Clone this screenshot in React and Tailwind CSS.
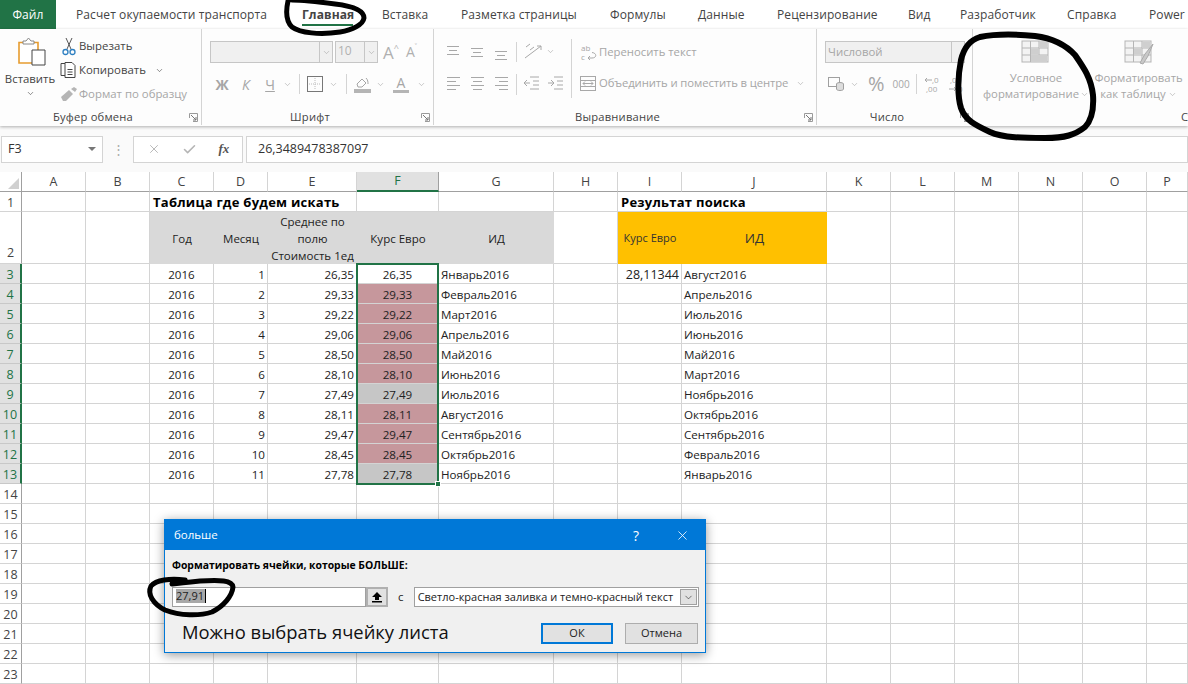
import React from 'react';
import { ChevronDown, X, Check } from 'lucide-react';

const FONT = "font-['Open_Sans','Noto_Sans',sans-serif]";

const tabs = [
  ['Расчет окупаемости транспорта', 'w-[226px]'],
  ['Главная', 'w-[80px] font-bold'],
  ['Вставка', 'w-[79px]'],
  ['Разметка страницы', 'w-[149px]'],
  ['Формулы', 'w-[88px]'],
  ['Данные', 'w-[79px]'],
  ['Рецензирование', 'w-[131px]'],
  ['Вид', 'w-[52px]'],
  ['Разработчик', 'w-[107px]'],
  ['Справка', 'w-[82px]'],
  ['Power', 'w-[39px]'],
];

const cols = ['A', 'B', 'C', 'D', 'E', 'F', 'G', 'H', 'I', 'J', 'K', 'L', 'M', 'N', 'O', 'P'];

const rows = [
  [1, '26,35', 'Январь2016', 'Август2016', 'none'],
  [2, '29,33', 'Февраль2016', 'Апрель2016', 'red'],
  [3, '29,22', 'Март2016', 'Июль2016', 'red'],
  [4, '29,06', 'Апрель2016', 'Июнь2016', 'red'],
  [5, '28,50', 'Май2016', 'Май2016', 'red'],
  [6, '28,10', 'Июнь2016', 'Март2016', 'red'],
  [7, '27,49', 'Июль2016', 'Ноябрь2016', 'gray'],
  [8, '28,11', 'Август2016', 'Октябрь2016', 'red'],
  [9, '29,47', 'Сентябрь2016', 'Сентябрь2016', 'red'],
  [10, '28,45', 'Октябрь2016', 'Февраль2016', 'red'],
  [11, '27,78', 'Ноябрь2016', 'Январь2016', 'gray'],
];

function Chev({ className = '' }) {
  return <ChevronDown size={9} strokeWidth={1.6} className={className} />;
}

function Cell({ className = '', children }) {
  return (
    <div className={`border-r border-b border-[#d4d4d4] flex items-center px-[2px] pt-[3px] whitespace-nowrap text-[11.6px] text-[#222] ${className}`}>
      {children}
    </div>
  );
}

function RowHead({ n, active, bottom }) {
  return (
    <div className={`flex justify-center border-b text-[12.5px] ${bottom ? 'items-end' : 'items-center pt-[3px]'} ${active ? 'bg-[#e1e1e1] border-[#c8c8c8] border-r-2 border-r-[#217346] text-[#217346]' : 'bg-white border-[#d4d4d4] border-r border-r-[#a0a0a0] text-[#444]'}`}>
      {n}
    </div>
  );
}

function Lines({ kind }) {
  // align icons, three short rows or rows of one width
  const sets = {
    top: [[1, 13, 3], [3, 11, 7], [1, 13, 11]],
    mid: [[1, 13, 5], [3, 11, 9], [1, 13, 13]],
    bot: [[1, 13, 8], [3, 11, 12], [1, 13, 16]],
    left: [[1, 14, 2], [1, 10, 6], [1, 14, 10], [1, 10, 14]],
    center: [[1, 14, 2], [3, 12, 6], [1, 14, 10], [3, 12, 14]],
    right: [[1, 14, 2], [5, 14, 6], [1, 14, 10], [5, 14, 14]],
  }[kind];
  return (
    <svg width="15" height="17" viewBox="0 0 15 17" stroke="#a8a8a8" strokeWidth="1">
      {sets.map(([a, b, y], i) => <line key={i} x1={a} x2={b} y1={y + 0.5} y2={y + 0.5} />)}
    </svg>
  );
}

function Launcher({ className = '' }) {
  return (
    <svg width="9" height="9" viewBox="0 0 9 9" fill="none" stroke="#9a9a9a" strokeWidth="1" className={className}>
      <path d="M0.5 5V0.5H8.5V8.5H4" />
      <path d="M2 2L7 7M7 4V7H4" stroke="#777" />
    </svg>
  );
}

function Sep({ className = '' }) {
  return <div className={`w-px bg-[#d4d4d4] ${className}`} />;
}

function GroupLabel({ children, launcher }) {
  return (
    <div className="absolute left-0 right-0 bottom-0 h-[16px] flex items-center justify-center pr-[15px] text-[11.2px] text-[#444] tracking-[0.2px]">
      {children}
      {launcher && <Launcher className="absolute right-[3px] top-[4px]" />}
    </div>
  );
}

function Clipboard() {
  return (
    <div className="w-[202px] h-[96px] shrink-0 relative border-r border-[#d4d4d4]">
      <div className="flex pt-[5px]">
        <div className="w-[60px] flex flex-col items-center pt-[3px] text-[11.4px] text-[#444]">
          <svg width="28" height="30" viewBox="0 0 28 30" fill="none" className="ml-[3px]">
            <path d="M1 5.5H20V26H1Z" fill="#fff" stroke="#e69c2f" strokeWidth="1.6" />
            <path d="M8 4 L10.5 1 L13 4 H16 V7 H5 V4Z" fill="#fff" stroke="#888" />
            <path d="M14 13H27V28H14Z" fill="#fff" stroke="#444" />
          </svg>
          <span className="mt-[4px] leading-[16px]">Вставить</span>
          <Chev className="mt-[2px] text-[#444]" />
        </div>
        <div className="flex flex-col text-[11.4px] text-[#444]">
          <div className="h-[24px] flex items-center">
            <svg width="19" height="19" viewBox="0 0 19 19" fill="none">
              <path d="M6 1L11 12M12 1L7 12" stroke="#555" />
              <circle cx="5.5" cy="15" r="2.5" stroke="#2d7fc1" strokeWidth="1.3" />
              <circle cx="12.5" cy="15" r="2.5" stroke="#2d7fc1" strokeWidth="1.3" />
            </svg>
            <span>Вырезать</span>
          </div>
          <div className="h-[24px] flex items-center">
            <svg width="19" height="18" viewBox="0 0 19 18" fill="none" stroke="#444">
              <path d="M5 2.5H1V14.5H5" />
              <path d="M5 1.5H12L15 4.5V16.5H5Z" fill="#fff" />
              <path d="M7.5 8.5H12.5M7.5 11H12.5M7.5 13.5H12.5" />
            </svg>
            <span>Копировать</span>
            <Chev className="ml-[9px] text-[#444]" />
          </div>
          <div className="h-[24px] flex items-center text-[#a6a6a6]">
            <svg width="19" height="17" viewBox="0 0 19 17" fill="#b5b5b5">
              <path d="M1 11L9 4L13 8L6 15H3Z" />
              <path d="M11 3L14 1L17 3L15 6Z" />
            </svg>
            <span>Формат по образцу</span>
          </div>
        </div>
      </div>
      <GroupLabel launcher>Буфер обмена</GroupLabel>
    </div>
  );
}

function FontGroup() {
  return (
    <div className="w-[232px] h-[96px] shrink-0 relative border-r border-[#d4d4d4] pl-[8px]">
      <div className="flex items-center mt-[12px] h-[22px]">
        <div className="w-[123px] h-[22px] bg-[#f0f0f0] border border-[#c6c6c6] flex justify-end">
          <div className="w-[13px] border-l border-[#c6c6c6] flex items-center justify-center"><Chev className="text-[#a6a6a6]" /></div>
        </div>
        <div className="w-[43px] h-[22px] ml-[2px] bg-[#f0f0f0] border border-[#c6c6c6] flex justify-between text-[12px] text-[#b0b0b0] pl-[2px]">
          <span>10</span>
          <div className="w-[13px] border-l border-[#c6c6c6] flex items-center justify-center"><Chev className="text-[#a6a6a6]" /></div>
        </div>
        <span className="ml-[5px] text-[17px] leading-none text-[#b0b0b0]">A</span>
        <span className="text-[9px] text-[#b0b0b0] self-start">^</span>
        <span className="ml-[7px] text-[14px] leading-none text-[#b0b0b0]">A</span>
        <span className="text-[8px] text-[#b0b0b0] self-start">˅</span>
      </div>
      <div className="flex items-center mt-[10px] h-[22px] text-[#a6a6a6]">
        <span className="w-[22px] ml-[1px] font-bold text-[14px] text-center">Ж</span>
        <span className="w-[22px] ml-[2px] italic text-[14px] text-center">К</span>
        <span className="w-[20px] ml-[3px] underline text-[14px] text-center">Ч</span>
        <Chev className="ml-[3px]" />
        <Sep className="h-[20px] ml-[7px]" />
        <svg width="16" height="16" viewBox="0 0 16 16" fill="none" className="ml-[7px]">
          <rect x="0.5" y="0.5" width="15" height="15" stroke="#777" />
          <path d="M8 2V14M2 8H14" stroke="#bbb" strokeDasharray="1 1" />
        </svg>
        <Chev className="ml-[6px]" />
        <Sep className="h-[20px] ml-[8px]" />
        <svg width="18" height="17" viewBox="0 0 18 17" fill="none" className="ml-[7px]">
          <path d="M3 8L8 3L12 7L8 11H4Z" stroke="#a6a6a6" />
          <path d="M12 2C14 4 14 6 14 8" stroke="#a6a6a6" />
          <rect x="0" y="13" width="17" height="4" fill="#b5b5b5" />
        </svg>
        <Chev className="ml-[4px]" />
        <div className="ml-[8px] flex flex-col items-center w-[16px]">
          <span className="text-[14px] leading-[14px] text-[#a6a6a6]">A</span>
          <span className="w-[16px] h-[3px] bg-[#b5b5b5]" />
        </div>
        <Chev className="ml-[8px]" />
      </div>
      <GroupLabel launcher>Шрифт</GroupLabel>
    </div>
  );
}

function AlignGroup() {
  return (
    <div className="w-[383px] h-[96px] shrink-0 relative border-r border-[#d4d4d4]">
      <div className="flex pt-[6px] pl-[12px] h-[70px]">
        <div className="grid grid-cols-[24px_24px_22px] grid-rows-[32px_32px] items-center">
          <Lines kind="top" /><Lines kind="mid" /><Lines kind="bot" />
          <Lines kind="left" /><Lines kind="center" /><Lines kind="right" />
        </div>
        <div className="flex flex-col items-center mr-[7px]">
          <Sep className="h-[20px] mt-[7px]" />
          <Sep className="h-[21px] mt-[12px]" />
        </div>
        <div className="flex flex-col w-[47px]">
          <div className="h-[32px] flex items-center">
            <svg width="18" height="16" viewBox="0 0 18 16" fill="none" stroke="#a8a8a8">
              <path d="M1 15L17 3M13 3H17V7" />
              <path d="M2 4L6 1M6 7L10 4" />
            </svg>
            <Chev className="ml-[4px] text-[#a6a6a6]" />
          </div>
          <div className="h-[32px] flex items-center">
            <svg width="16" height="14" viewBox="0 0 16 14" stroke="#a8a8a8" fill="none">
              <path d="M6 1H15M9 5H15M9 9H15M6 13H15M0 7H6M3 4L0 7L3 10" />
            </svg>
            <svg width="16" height="14" viewBox="0 0 16 14" stroke="#a8a8a8" fill="none" className="ml-[8px] shrink-0">
              <path d="M6 1H15M9 5H15M9 9H15M6 13H15M0 7H6M3 4L6 7L3 10" />
            </svg>
          </div>
        </div>
        <Sep className="h-[59px] mt-[4px] mr-[9px]" />
        <div className="flex flex-col text-[11.3px] text-[#a6a6a6] whitespace-nowrap pt-[2px]">
          <div className="h-[32px] flex items-center">
            <div className="w-[16px] mr-[2px] flex flex-col">
              <span className="block text-[8px] h-[8px] leading-[8px]">ab</span>
              <div className="flex items-end">
                <span className="block text-[8px] h-[8px] leading-[8px] w-[6px]">c</span>
                <svg width="10" height="9" viewBox="0 0 10 9" fill="none" stroke="#a8a8a8">
                  <path d="M5 0.5C10 1 10 6 5 6H1M3 4L1 6L3 8" />
                </svg>
              </div>
            </div>
            <span>Переносить текст</span>
          </div>
          <div className="h-[32px] flex items-center">
            <svg width="16" height="15" viewBox="0 0 16 15" fill="none" stroke="#a8a8a8" className="-ml-[1px] mr-[3px]">
              <rect x="0.5" y="0.5" width="15" height="14" />
              <path d="M0.5 4.5H15.5M0.5 10.5H15.5M3 7.5H13M5 5.5L3 7.5L5 9.5M11 5.5L13 7.5L11 9.5" />
            </svg>
            <span className="tracking-[-0.1px]">Объединить и поместить в центре</span>
            <Chev className="ml-[8px]" />
          </div>
        </div>
      </div>
      <GroupLabel launcher>Выравнивание</GroupLabel>
    </div>
  );
}

function NumberGroup() {
  return (
    <div className="w-[156px] h-[96px] shrink-0 relative border-r border-[#d4d4d4] pl-[8px]">
      <div className="w-[140px] h-[22px] mt-[12px] bg-[#f0f0f0] border border-[#c6c6c6] flex items-center justify-between pl-[2px] text-[11.4px] text-[#a6a6a6]">
        <span>Числовой</span>
        <div className="w-[13px] h-full border-l border-[#c6c6c6]" />
      </div>
      <div className="flex items-center mt-[10px] h-[22px] text-[#a6a6a6]">
        <svg width="16" height="14" viewBox="0 0 16 14" fill="none" stroke="#a0a0a0" className="ml-[3px]">
          <rect x="0.5" y="0.5" width="11" height="9" />
          <ellipse cx="12" cy="7" rx="3.5" ry="1.5" fill="#ddd" />
          <path d="M8.5 7V12C8.5 14 15.5 14 15.5 12V7" fill="#ddd" />
        </svg>
        <Chev className="ml-[6px]" />
        <span className="ml-[9px] text-[20px] leading-none">%</span>
        <span className="ml-[8px] text-[10px] w-[17px]">000</span>
        <Sep className="h-[20px] ml-[6px]" />
        <svg width="16" height="18" viewBox="0 0 16 18" fill="none" className="ml-[7px]">
          <path d="M1 5H8M3 3L1 5L3 7" stroke="#a8a8a8" />
          <text x="8" y="8" fontSize="8" fill="#a8a8a8">,0</text>
          <text x="2" y="17" fontSize="8" fill="#a8a8a8">,00</text>
        </svg>
        <svg width="16" height="18" viewBox="0 0 16 18" fill="none" className="ml-[8px]">
          <text x="2" y="8" fontSize="8" fill="#a8a8a8">,00</text>
          <path d="M1 14H8M6 12L8 14L6 16" stroke="#a8a8a8" />
          <text x="8" y="17" fontSize="8" fill="#a8a8a8">,0</text>
        </svg>
      </div>
      <GroupLabel launcher>Число</GroupLabel>
    </div>
  );
}

function TableIcon({ brush }) {
  return (
    <svg width="30" height="26" viewBox="0 0 30 26" fill="none">
      <rect x="1" y="2" width="26" height="21" fill="#f3f3f3" stroke="#b5b5b5" />
      <path d="M1 9H27M1 16H27M9.5 2V23M18 2V23" stroke="#b5b5b5" />
      <rect x="10" y="9.5" width="8" height="6" fill="#cfcfcf" />
      <rect x="18" y="2.5" width="8.5" height="6.5" fill="#cfcfcf" />
      {brush ? <path d="M16 24L21 15L29 5L24 17L19 25Z" fill="#c8c8c8" stroke="#aaa" /> : <rect x="10" y="16" width="16" height="7" fill="#cfcfcf" />}
    </svg>
  );
}

function StylesGroup() {
  return (
    <div className="flex-1 h-[96px] relative text-[11.3px] text-[#a6a6a6] pt-[10px]">
      <div className="flex">
        <div className="w-[122px] shrink-0 flex flex-col items-center pl-[4px]">
          <TableIcon />
          <span className="mt-[5px] leading-[16px]">Условное</span>
          <span className="leading-[16px] whitespace-nowrap flex items-center">форматирование<Chev className="ml-[1px]" /></span>
        </div>
        <div className="w-[87px] shrink-0 flex flex-col items-center">
          <TableIcon brush />
          <span className="mt-[5px] leading-[16px]">Форматировать</span>
          <span className="leading-[16px] whitespace-nowrap flex items-center">как таблицу<Chev className="ml-[2px]" /></span>
        </div>
      </div>
      <span className="absolute left-[208px] bottom-0 h-[16px] text-[11.2px] text-[#444] whitespace-nowrap">Стили</span>
    </div>
  );
}

function Ribbon() {
  return (
    <div className="h-[97px] flex bg-[#fdfdfd] shadow-[0_1px_3px_rgba(0,0,0,0.3)] relative">
      <Clipboard />
      <FontGroup />
      <AlignGroup />
      <NumberGroup />
      <StylesGroup />
    </div>
  );
}

function FormulaBar() {
  return (
    <div className="h-[46px] flex items-center bg-[#fafafa] text-[13px] text-[#333]">
      <div className="w-[102px] h-[27px] ml-[1px] bg-white border border-[#d4d4d4] flex items-center justify-between px-[6px] text-[12.5px]">
        <span>F3</span>
        <span className="w-0 h-0 border-x-[4px] border-x-transparent border-t-[4px] border-t-[#777]" />
      </div>
      <span className="w-[30px] text-center text-[#aaa] leading-none">⋮</span>
      <div className="w-[110px] h-[27px] bg-white border border-[#d4d4d4] flex items-center justify-around px-[2px] text-[#b5b5b5]">
        <X size={14} strokeWidth={1.6} />
        <Check size={15} strokeWidth={2.5} />
        <span className="italic text-[#555] font-['Liberation_Serif',serif] font-bold text-[13px]">fx</span>
      </div>
      <div className="flex-1 h-[27px] ml-[3px] bg-white border border-[#d4d4d4] flex items-center pl-[11px] text-[12.5px]">
        26,3489478387097
      </div>
    </div>
  );
}

function Sheet() {
  return (
    <div className="grid grid-cols-[22px_64px_64px_64px_54px_89px_82px_115px_64px_64px_145px_64px_64px_64px_64px_64px_41px] grid-rows-[20px_20px_52px_repeat(21,20px)] h-[512px] overflow-hidden">
      <div className="border-r border-b border-[#a0a0a0] bg-white flex items-end justify-end pr-[2px] pb-[2px]">
        <span className="w-0 h-0 border-l-[11px] border-l-transparent border-b-[11px] border-b-[#d0d0d0]" />
      </div>
      {cols.map((c) => (
        <div key={c} className={`flex items-center justify-center pt-[1px] text-[12.5px] ${c === 'F' ? 'bg-[#e1e1e1] text-[#217346] border-b-2 border-[#217346] border-r border-r-[#a0a0a0]' : 'bg-white text-[#444] border-r border-r-[#d4d4d4] border-b border-b-[#a0a0a0]'}`}>
          {c}
        </div>
      ))}

      <RowHead n={1} />
      <Cell /><Cell />
      <Cell className="col-span-3 font-bold text-[13px] text-black px-[3px] tracking-[0.25px]">Таблица где будем искать</Cell>
      <Cell /><Cell /><Cell />
      <Cell className="col-span-2 font-bold text-[13px] text-black px-[3px] tracking-[0.25px]">Результат поиска</Cell>
      <Cell /><Cell /><Cell /><Cell /><Cell /><Cell />

      <RowHead n={2} bottom />
      <Cell /><Cell />
      <div className="col-span-5 bg-[#d9d9d9] grid grid-cols-[64px_54px_89px_82px_115px] items-center text-center text-[11.5px] text-[#222] leading-[17px]">
        <span>Год</span>
        <span>Месяц</span>
        <span className="whitespace-nowrap">Среднее по<br />полю<br />Стоимость 1ед</span>
        <span>Курс Евро</span>
        <span>ИД</span>
      </div>
      <Cell />
      <div className="col-span-2 bg-[#ffc000] grid grid-cols-[64px_145px] items-center text-center text-[#333]">
        <span className="text-[11px] whitespace-nowrap">Курс Евро</span>
        <span className="text-[13.5px]">ИД</span>
      </div>
      <Cell /><Cell /><Cell /><Cell /><Cell /><Cell />

      {rows.map(([m, val, g, j, kind], i) => (
        <React.Fragment key={m}>
          <RowHead n={m + 2} active />
          <Cell /><Cell />
          <Cell className="justify-center">2016</Cell>
          <Cell className="justify-end">{m}</Cell>
          <Cell className="justify-end">{val}</Cell>
          <Cell className={`justify-center ${kind === 'red' ? 'bg-[#c6979c] text-[#7e0a0f] border-[#c6979c]' : kind === 'gray' ? 'bg-[#c6c6c6] border-[#c6c6c6]' : ''}`}>{val}</Cell>
          <Cell>{g}</Cell>
          <Cell />
          <Cell className="justify-end text-[12.5px]">{i === 0 ? '28,11344' : ''}</Cell>
          <Cell>{j}</Cell>
          <Cell /><Cell /><Cell /><Cell /><Cell /><Cell />
        </React.Fragment>
      ))}

      {[14, 15, 16, 17, 18, 19, 20, 21, 22, 23].map((n) => (
        <React.Fragment key={n}>
          <RowHead n={n} />
          {cols.map((c) => <Cell key={c} />)}
        </React.Fragment>
      ))}
    </div>
  );
}

function Dialog() {
  return (
    <div className="absolute left-[164px] top-[519px] w-[542px] h-[134px] bg-[#f0f0f0] border border-[#0078d7] shadow-[0_2px_10px_rgba(0,0,0,0.4)] text-[11.5px] text-[#222] flex flex-col">
      <div className="h-[30px] bg-[#0078d7] text-white flex items-center pl-[9px]">
        <span className="flex-1">больше</span>
        <span className="text-[14px] mr-[36px]">?</span>
        <X size={15} strokeWidth={1.3} className="mr-[15px]" />
      </div>
      <div className="pl-[7px] pr-[6px] pt-[7px] flex flex-col">
        <div className="font-bold text-[10.4px] leading-[16px] text-black">Форматировать ячейки, которые БОЛЬШЕ:</div>
        <div className="flex items-center mt-[14px] h-[20px]">
          <div className="w-[195px] h-[20px] bg-white border border-[#a0a0a0] flex items-center pl-[3px] text-[11px]">
            <span className="bg-[#a8a8a8] text-[#222] border-r border-black pr-[1px] leading-[14px] -mt-[2px]">27,91</span>
          </div>
          <div className="w-[22px] h-[20px] bg-[#e1e1e1] border-2 border-[#b0b0b0] flex items-center justify-center">
            <svg width="12" height="12" viewBox="0 0 12 12" fill="#000">
              <path d="M6 1L11 6H8V9H4V6H1Z" />
              <rect x="1" y="10" width="10" height="1.5" />
            </svg>
          </div>
          <span className="w-[26px] text-center">с</span>
          <div className="w-[287px] h-[20px] bg-white border border-[#a0a0a0] flex items-center justify-between pl-[3px] pr-[1px] whitespace-nowrap text-[11px]">
            <span>Светло-красная заливка и темно-красный текст</span>
            <div className="w-[17px] h-[16px] bg-[#e1e1e1] border border-[#a0a0a0] flex items-center justify-center shrink-0">
              <ChevronDown size={11} strokeWidth={1.3} />
            </div>
          </div>
        </div>
        <div className="flex items-center mt-[16px] h-[21px]">
          <span className="ml-[10px] w-[359px] text-[18.4px] leading-none text-[#111] whitespace-nowrap -mt-[2px]">Можно выбрать ячейку листа</span>
          <button className="w-[72px] h-[21px] bg-[#e1e1e1] border-2 border-[#0078d7] text-[11px]">ОК</button>
          <button className="w-[73px] h-[21px] ml-[12px] bg-[#e1e1e1] border border-[#adadad] text-[11px]">Отмена</button>
        </div>
      </div>
    </div>
  );
}

// marker scribbles drawn over the shot, plus the sheet selection frame
function Overlay() {
  return (
    <>
      <div className="absolute left-[356px] top-[263px] w-[83px] h-[222px] border-2 border-[#217346] pointer-events-none">
        <span className="absolute right-[-4px] bottom-[-4px] w-[6px] h-[6px] bg-[#217346] border border-white" />
      </div>
      <svg width="1188" height="684" viewBox="0 0 1188 684" fill="none" stroke="#000" strokeLinecap="round" strokeLinejoin="round" className="absolute left-0 top-0 pointer-events-none">
        <path strokeWidth="5" d="M288 1C286 10 285 20 292 27C300 33 320 35 340 32C352 30 363 25 364 18C364 10 352 6 335 4C320 2 305 0 292 0" />
        <path strokeWidth="6" d="M980 37C970 40 964 47 961 60C958 75 957 95 961 108C965 120 975 125 990 132C1003 138 1025 138 1045 138C1065 138 1075 135 1085 127C1092 120 1094 110 1093 95C1091 78 1084 68 1075 55C1065 44 1050 38 1035 36C1015 34 995 34 980 37" />
        <path strokeWidth="5" d="M185 580C170 578 156 580 151 586C147 594 153 604 165 610C180 616 200 616 212 612C224 606 232 596 233 587C232 580 220 580 200 581C190 582 180 583 172 584" />
      </svg>
    </>
  );
}

export default function App() {
  return (
    <div className={`relative w-[1188px] h-[684px] overflow-hidden bg-white ${FONT}`}>
      <div className="h-[29px] flex items-center text-[12px] text-[#444] tracking-[0.1px] bg-white">
        <div className="w-[56px] h-[29px] bg-[#217346] text-white flex items-center justify-center">Файл</div>
        <div className="w-[20px]" />
        {tabs.map(([t, cls]) => (
          <div key={t} className={`h-[29px] flex items-center whitespace-nowrap relative ${cls}`}>
            {t}
            {t === 'Главная' && <span className="absolute left-0 top-[24px] w-[51px] h-[2px] bg-[#217346]" />}
          </div>
        ))}
      </div>
      <Ribbon />
      <FormulaBar />
      <Sheet />
      <Dialog />
      <Overlay />
    </div>
  );
}
